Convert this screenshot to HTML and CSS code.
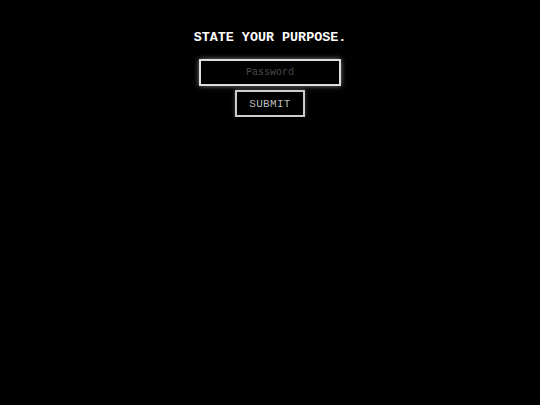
FILE: index.html
```html
<!DOCTYPE html>
<html lang="en">
<head>
  <meta charset="UTF-8">
  <title>State your purpose</title>
  <link rel="stylesheet" href="styles.css">
</head>
<body>
  <div class="gate">
    <h1 class="gate-title">STATE YOUR PURPOSE.</h1>
    <form class="gate-form" onsubmit="return false;">
      <input type="password" class="gate-input" placeholder="Password">
      <button type="submit" class="gate-btn">SUBMIT</button>
    </form>
  </div>
</body>
</html>
```

FILE: styles.css
```css
body {
  margin: 0;
  background: #000;
  color: #fff;
  font-family: 'Courier New', 'Nimbus Mono PS', 'Nimbus Mono L', 'FreeMono', 'Liberation Mono', monospace;
}
.gate {
  display: flex;
  flex-direction: column;
  align-items: center;
  padding-top: 30px;
}
.gate-title {
  margin: 0 0 14px 0;
  font-size: 13.4px;
  font-weight: bold;
  line-height: 15px;
  letter-spacing: 0;
}
.gate-form {
  display: flex;
  flex-direction: column;
  align-items: center;
  gap: 4px;
}
.gate-input {
  box-sizing: border-box;
  width: 142px;
  height: 27px;
  background: #000;
  border: 2px solid #ddd;
  box-shadow: 0 0 5px rgba(255,255,255,0.5);
  color: #ddd;
  font-family: inherit;
  font-size: 10px;
  text-align: center;
  outline: none;
}
.gate-input::placeholder {
  color: #4a4a4a;
}
.gate-btn {
  box-sizing: border-box;
  width: 70px;
  height: 27px;
  background: #000;
  border: 2px solid #ccc;
  box-shadow: 0 0 4px rgba(255,255,255,0.3);
  color: #bbb;
  font-family: inherit;
  font-size: 11px;
  letter-spacing: 0.3px;
  cursor: pointer;
}
```
